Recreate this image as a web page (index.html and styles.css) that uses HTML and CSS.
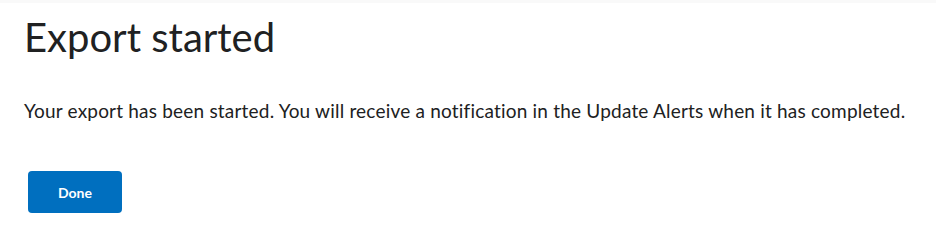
FILE: index.html
```html
<!DOCTYPE html>
<html lang="en">
<head>
    <meta charset="UTF-8">
    <title>Export started</title>
    <link rel="stylesheet" href="styles.css">
</head>
<body>
    <div class="topbar"></div>
    <div class="dialog">
        <h1 class="title">Export started</h1>
        <p class="message">Your export has been started. You will receive a notification in the Update Alerts when it has completed.</p>
        <div class="actions">
            <button class="btn-primary">Done</button>
        </div>
    </div>
</body>
</html>
```

FILE: styles.css
```css
*{
    margin: 0;
    padding: 0;
    box-sizing: border-box;
}
body{
    font-family: Lato, "Liberation Sans", sans-serif;
    color: #202122;
    background: #fff;
}
.topbar{
    height: 3px;
    background: #f9f9f9;
}
.dialog{
    padding: 0 24px;
}
.title{
    font-size: 40px;
    font-weight: 400;
    line-height: 48px;
    margin-top: 10px;
}
.message{
    font-size: 19px;
    letter-spacing: 0.2px;
    line-height: 28px;
    margin-top: 36px;
}
.actions{
    margin-top: 46px;
    padding-left: 4px;
}
.btn-primary{
    font-family: Lato, "Liberation Sans", sans-serif;
    font-size: 14px;
    font-weight: 700;
    color: #fff;
    background: #006fbf;
    border: none;
    border-radius: 4px;
    width: 94px;
    height: 42px;
}
```
